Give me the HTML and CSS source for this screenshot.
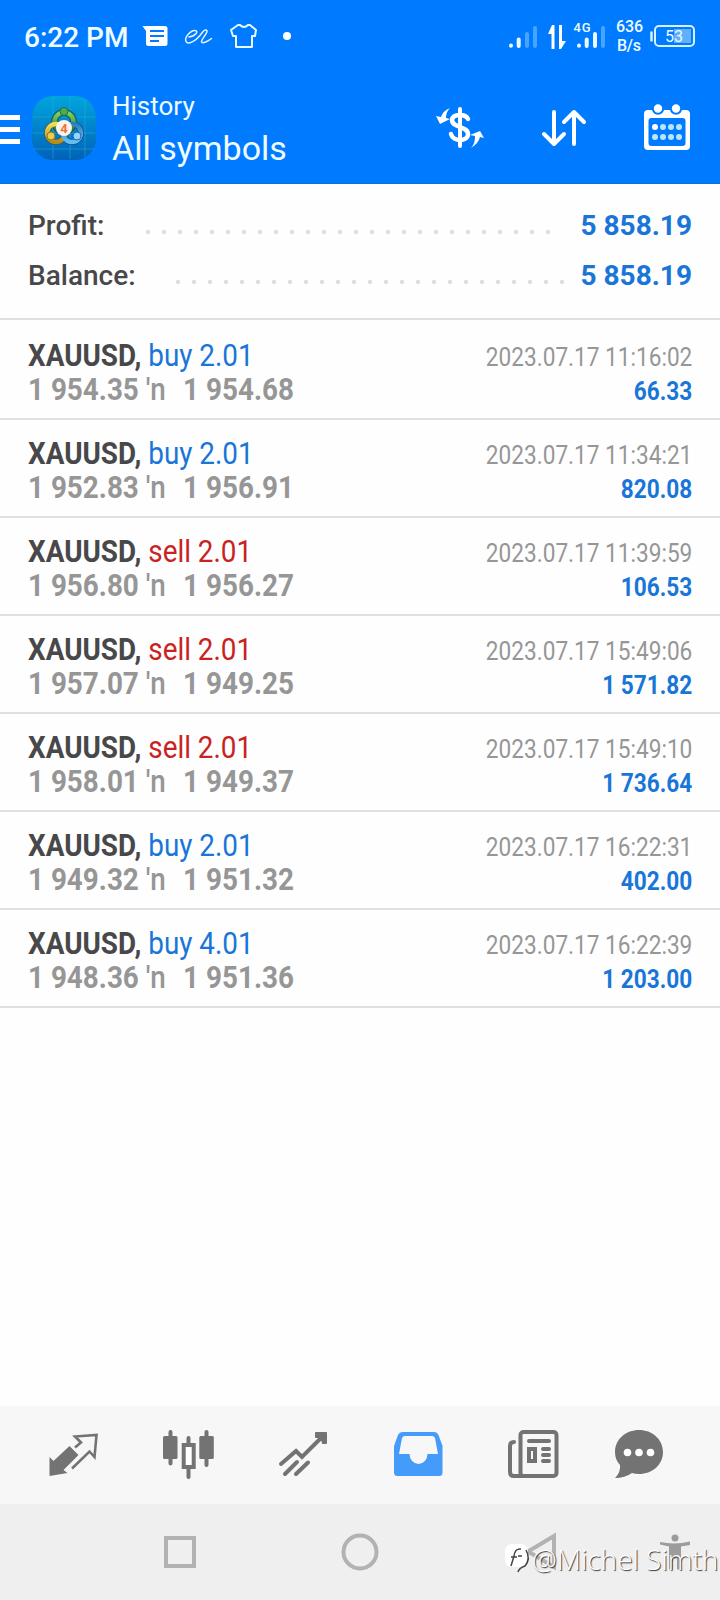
FILE: index.html
```
<!DOCTYPE html>
<html lang="en">
<head>
<meta charset="utf-8">
<title>History</title>
<link rel="stylesheet" href="styles.css">
</head>
<body>
<header class="top">
  <div class="status">
    <span class="clock">6:22 PM</span>
    <svg class="notices" width="160" height="32" viewBox="140 20 160 32">
      <path fill="#fff" d="M142.500 26h22.500a2.500 2.500 0 0 1 2.500 2.500v15a2.500 2.500 0 0 1-2.500 2.500h-16.500a2.500 2.500 0 0 1-2.500-2.500V31z"/>
      <path stroke="#007aff" stroke-width="2" d="M150 31h14M150 36h14M150 41h9"/>
      <path fill="none" stroke="#e4f6ff" stroke-width="1.500" stroke-linecap="round" d="M189 37c7-1 10-6 6-6.500c-4-.5-11 7-9 11c2 4 10-1 14-6c3-4 4-6 6-5.500c4 1-5 9-4.500 12c1 2 7-1 10-3.500"/>
      <path fill="none" stroke="#e8fbff" stroke-width="2" stroke-linejoin="round" d="M238 25l-7 5 2 6h3v11h16v-11h3l1-6-6-5h-2q-4 4-8 0z"/>
      <circle cx="287" cy="36" r="4" fill="#fff"/>
    </svg>
    <svg class="signals" width="200" height="36" viewBox="505 18 200 36">
      <g stroke="#e8fbff" stroke-width="4" stroke-linecap="round">
        <path d="M511 45.500v.2M518.700 39.500v6.500M579 45.500v.2M586.700 39.500v6.500M595 34v12"/>
        <path stroke="#47a5ff" d="M527 34v12M535 28v18M603 28v18"/>
      </g>
      <path fill="#fff" d="M548 34l4-9h2.500v24h-3V34zM559 25h3v16h4l-5 8h-2z"/>
      <text class="svg-net" x="573.500" y="31.500" textLength="17">4G</text>
      <text class="svg-rate" x="616" y="32" textLength="27">636</text>
      <text class="svg-rate" x="617" y="51" textLength="24">B/s</text>
      <rect x="655" y="26" width="39" height="20" rx="4" fill="none" stroke="#d6f1ff" stroke-width="2"/>
      <rect x="674" y="29" width="17" height="14" fill="#5fb0ff"/>
      <path stroke="#d6f1ff" stroke-width="2.500" d="M651.500 31.500v10"/>
      <text class="svg-battery" x="665" y="42" textLength="18" lengthAdjust="spacingAndGlyphs">53</text>
    </svg>
  </div>
  <div class="appbar">
    <div class="menu"><i></i><i></i><i></i></div>
    <svg class="logo" width="64" height="64" viewBox="0 0 64 64">
      <defs>
        <linearGradient id="tile" x2="0" y2="1"><stop offset="0" stop-color="#00a5dd"/><stop offset="1" stop-color="#0062b8"/></linearGradient>
        <linearGradient id="green" x2="0" y2="1"><stop offset="0" stop-color="#7ed36a"/><stop offset="1" stop-color="#237b35"/></linearGradient>
        <linearGradient id="gold" x2="0" y2="1"><stop offset="0" stop-color="#f2dc55"/><stop offset="1" stop-color="#b88b18"/></linearGradient>
        <linearGradient id="sky" x2="0" y2="1"><stop offset="0" stop-color="#2b7fc0"/><stop offset="1" stop-color="#64bff1"/></linearGradient>
      </defs>
      <rect width="64" height="64" rx="21" fill="url(#tile)"/>
      <path stroke="#35b6e4" stroke-width=".7" opacity=".65" d="M21 1v62M38 1v62M53 3v58M1 21h62M1 37h62M1 53h62"/>
      <circle cx="32" cy="26" r="9.500" fill="none" stroke="#195e55" stroke-width="7"/>
      <circle cx="24" cy="37" r="9" fill="none" stroke="#34585a" stroke-width="6"/>
      <circle cx="40" cy="37" r="9" fill="none" stroke="#174b83" stroke-width="6"/>
      <circle cx="32" cy="26" r="9.500" fill="none" stroke="url(#green)" stroke-width="4.500"/>
      <circle cx="24" cy="37" r="9" fill="none" stroke="url(#gold)" stroke-width="4.500"/>
      <circle cx="40" cy="37" r="9" fill="none" stroke="url(#sky)" stroke-width="4.500"/>
      <circle cx="32" cy="15.500" r="4" fill="#50a953" stroke="#237244"/>
      <circle cx="19" cy="40" r="4" fill="#ebd047" stroke="#8a7625"/>
      <circle cx="45" cy="40" r="4" fill="#90d4ff" stroke="#1a68ad"/>
      <circle cx="32" cy="32" r="8" fill="#fff2e8"/>
      <text class="svg-four" x="32" y="36.500" text-anchor="middle">4</text>
    </svg>
    <div class="titles"><div class="sub">History</div><div class="main">All symbols</div></div>
    <svg class="act-dollar" width="50" height="44" viewBox="435 106 50 44">
      <g fill="none" stroke="#fff" stroke-linecap="round">
        <path stroke-width="4" d="M460 109v37"/>
        <path stroke-width="4.500" d="M468 119c-2-5-15-6-16 1c0 8 16 6 16 14c0 8-15 8-17 0"/>
      </g>
      <path fill="#fff" d="M450 108c-5 2-8 5-9 9l-5-1 4 8 10-5-4-1c0-4 1-7 4-10zM471 148c5-3 8-7 9-11l4 1-4-7-10 4 5 1c0 5-1 9-4 12z"/>
    </svg>
    <svg class="act-sort" width="46" height="40" viewBox="541 108 46 40">
      <path fill="none" stroke="#fff" stroke-width="4" stroke-linecap="round" stroke-linejoin="round" d="M554 112v32M544 134l10 10 10-10M574 144v-32M564 122l10-10 10 10"/>
    </svg>
    <svg class="act-cal" width="46" height="48" viewBox="644 103 46 48">
      <rect x="644" y="110" width="46" height="40" rx="4" fill="#fff"/>
      <path fill="#007aff" d="M651.500 118h31a3 3 0 0 1 3 3v22a3 3 0 0 1-3 3h-31a3 3 0 0 1-3-3v-22a3 3 0 0 1 3-3z"/>
      <g fill="#fff" stroke="#007aff" stroke-width="2"><circle cx="658" cy="108.500" r="5.200"/><circle cx="676" cy="108.500" r="5.200"/></g>
      <g fill="#b9e5ff"><circle cx="655" cy="127" r="3" fill="#fff"/><circle cx="663" cy="127" r="3"/><circle cx="671" cy="127" r="3"/><circle cx="679" cy="127" r="3"/><circle cx="655" cy="137" r="3"/><circle cx="663" cy="137" r="3"/><circle cx="671" cy="137" r="3"/><circle cx="679" cy="137" r="3"/></g>
    </svg>
  </div>
</header>
<main class="content">
  <section class="summary">
    <div class="total"><b>Profit:</b><i class="dots dots-profit"></i><span>5 858.19</span></div>
    <div class="total"><b>Balance:</b><i class="dots dots-balance"></i><span>5 858.19</span></div>
  </section>
  <ul class="deals">
    <li class="deal"><div class="deal-l"><p class="sym">XAUUSD, <span class="buy">buy 2.01</span></p><p class="px">1 954.35<span class="to">′n</span>1 954.68</p></div><div class="deal-r"><p class="date">2023.07.17 11:16:02</p><p class="gain">66.33</p></div></li>
    <li class="deal"><div class="deal-l"><p class="sym">XAUUSD, <span class="buy">buy 2.01</span></p><p class="px">1 952.83<span class="to">′n</span>1 956.91</p></div><div class="deal-r"><p class="date">2023.07.17 11:34:21</p><p class="gain">820.08</p></div></li>
    <li class="deal"><div class="deal-l"><p class="sym">XAUUSD, <span class="sell">sell 2.01</span></p><p class="px">1 956.80<span class="to">′n</span>1 956.27</p></div><div class="deal-r"><p class="date">2023.07.17 11:39:59</p><p class="gain">106.53</p></div></li>
    <li class="deal"><div class="deal-l"><p class="sym">XAUUSD, <span class="sell">sell 2.01</span></p><p class="px">1 957.07<span class="to">′n</span>1 949.25</p></div><div class="deal-r"><p class="date">2023.07.17 15:49:06</p><p class="gain">1 571.82</p></div></li>
    <li class="deal"><div class="deal-l"><p class="sym">XAUUSD, <span class="sell">sell 2.01</span></p><p class="px">1 958.01<span class="to">′n</span>1 949.37</p></div><div class="deal-r"><p class="date">2023.07.17 15:49:10</p><p class="gain">1 736.64</p></div></li>
    <li class="deal"><div class="deal-l"><p class="sym">XAUUSD, <span class="buy">buy 2.01</span></p><p class="px">1 949.32<span class="to">′n</span>1 951.32</p></div><div class="deal-r"><p class="date">2023.07.17 16:22:31</p><p class="gain">402.00</p></div></li>
    <li class="deal"><div class="deal-l"><p class="sym">XAUUSD, <span class="buy">buy 4.01</span></p><p class="px">1 948.36<span class="to">′n</span>1 951.36</p></div><div class="deal-r"><p class="date">2023.07.17 16:22:39</p><p class="gain">1 203.00</p></div></li>
  </ul>
</main>
<nav class="tabs">
  <svg width="52" height="52" viewBox="47 1428 52 52"><path fill="#737373" d="M49.500 1457l4 4 16-15 9 9-15 15 4 3-18 3z"/><path fill="none" stroke="#737373" stroke-width="2.600" d="M75 1447.500l6-5-6-6 21.500-1.500-2 22-5-5.500-17.500 17"/></svg>
  <svg width="52" height="52" viewBox="162 1428 52 52"><path stroke="#737373" stroke-width="4" stroke-linecap="round" d="M170.500 1432v31.500M188.500 1438v10M188.500 1467v10M206.500 1432v33"/><rect x="163" y="1436" width="14.500" height="23" rx="1.500" fill="#737373"/><rect x="199.300" y="1436" width="14.500" height="23" rx="1.500" fill="#737373"/><rect x="183.700" y="1445" width="10" height="22" fill="#fff" stroke="#737373" stroke-width="4"/></svg>
  <svg width="52" height="52" viewBox="277 1428 52 52"><path fill="none" stroke="#737373" stroke-width="4" stroke-linecap="round" d="M281 1464l15-13 6 6 22-22M285 1474l12-12M296 1474l12-11.500"/><path fill="#737373" d="M315.500 1432.500h11v11h-4l-1.500-6h-5.500z" stroke="#737373"/></svg>
  <svg width="52" height="52" viewBox="392 1428 52 52"><path fill="#449bfa" d="M403 1432h31q3 0 4.500 3l4 11v26.500q0 3.500-3.500 3.500h-41.500q-3.500 0-3.500-3.500v-26.500l4-11q1.500-3 5-3z"/><path fill="#f7f7f7" d="M405 1436h27q2 0 3 2l3 16h-10.500a9 10 0 0 1-18 0h-10.500l3-16q1-2 3-2z"/></svg>
  <svg width="52" height="52" viewBox="507 1428 52 52"><path fill="none" stroke="#737373" stroke-width="4" stroke-linecap="round" d="M514 1442q-4 0-4 4v26q0 4 4 4h12"/><rect x="520.500" y="1432" width="36" height="44" rx="3" fill="#f7f7f7" stroke="#737373" stroke-width="4"/><path fill="none" stroke="#737373" stroke-width="4" stroke-linecap="round" d="M529 1441h20M543 1449h6M543 1455h6M543 1461h6"/><rect x="529" y="1449" width="6" height="12" fill="none" stroke="#737373" stroke-width="4"/></svg>
  <svg width="52" height="52" viewBox="613 1428 52 52"><path fill="#737373" d="M639 1430c13 0 24 9 24 22s-11 22-24 22q-4 0-7-1q-7 5-17 5q6-6 5-13q-5-5-5-13c0-13 11-22 24-22z"/><g fill="#fff"><circle cx="627.500" cy="1452.500" r="3.800"/><circle cx="639" cy="1452.500" r="3.800"/><circle cx="650.500" cy="1452.500" r="3.800"/></g></svg>
</nav>
<footer class="sysnav">
  <svg width="560" height="44" viewBox="150 1530 560 44" fill="none" stroke="#b2b2b2" stroke-width="4">
    <rect x="166" y="1538" width="28" height="28"/><circle cx="360" cy="1552" r="16.500"/>
    <path d="M554 1536v31l-26-15.500z"/>
    <g fill="#9c9c9c" stroke="none"><circle cx="675" cy="1538" r="3.500"/><path d="M660 1542q15 3 30-.5v3.500l-9 1.500v23h-4v-11h-4v11h-4v-23l-9-2z"/></g>
  </svg>
  <div class="watermark">
    <svg width="28" height="34" viewBox="504 1542 28 34"><rect x="505" y="1544" width="23" height="23" rx="7" fill="#fff"/><path fill="none" stroke="#444" stroke-width="1.500" d="M521 1549q-6-1-7 7l-3 10M511 1557h6M518 1556h4M526 1550q5 9-1 16q-6 2-7 6"/></svg>
    <span>@Michel Simth</span>
  </div>
</footer>
</body>
</html>
```

FILE: styles.css
```
* { box-sizing: border-box; }
body {
  margin: 0;
  width: 720px;
  height: 1600px;
  display: flex;
  flex-direction: column;
  overflow: hidden;
  background: #fefefe;
  font-family: Roboto, "Liberation Sans", sans-serif;
}
svg { display: block; flex: none; }
p, ul { margin: 0; padding: 0; }

.top { height: 184px; background: #007aff; border-bottom: 1px solid #0a6fdf; color: #effcff; }
.status { height: 72px; display: flex; align-items: center; padding-left: 24px; }
.clock { width: 116px; font-size: 28px; font-weight: 500; line-height: 32px; padding-top: 3px; white-space: nowrap; }
.signals { margin-left: 205px; }
.svg-net, .svg-rate, .svg-battery { fill: #effcff; font-weight: 500; font-size: 13px; }
.svg-rate { font-size: 16px; }
.svg-battery { font-size: 17px; font-weight: 400; }
.svg-four { font-size: 13px; font-weight: 700; fill: #e8743b; }

.appbar { height: 111px; display: flex; align-items: flex-start; padding-top: 24px; }
.menu { width: 20px; margin-top: 19px; display: grid; gap: 7px; }
.menu i { height: 5px; background: #fff; }
.logo { margin-left: 12px; }
.titles { width: 323px; padding-left: 16px; white-space: nowrap; }
.sub { font-size: 26px; line-height: 30px; margin-top: -5px; }
.main { font-size: 34px; line-height: 40px; margin-top: 7px; }
.act-dollar { margin: 10px 0 0 16px; }
.act-sort { margin: 12px 0 0 56px; }
.act-cal { margin: 7px 0 0 57px; }

.content { height: 1222px; }
.summary { height: 136px; padding: 17px 28px 0; border-bottom: 2px solid #e0e0e0; }
.total { height: 50px; display: flex; justify-content: space-between; font-size: 28px; line-height: 50px; color: #48484a; }
.total b { width: 112px; font-weight: 500; white-space: nowrap; }
.total span { flex: 1; text-align: right; font-weight: 700; color: #1976d8; white-space: nowrap; }
.dots { height: 6px; margin-top: 28px; background: radial-gradient(circle at 8px 3px, #dedede 0 1.8px, transparent 2.5px) 0 0 / 16px 6px; }
.dots-profit { width: 416px; }
.dots-balance { width: 400px; margin-left: 30px; }

.deals { list-style: none; }
.deal { height: 98px; display: flex; justify-content: space-between; padding: 16px 28px 0; border-bottom: 2px solid #e0e0e0; white-space: nowrap; }
.deal:first-child { height: 100px; padding-top: 18px; }
.deal-l p { font-size: 32px; line-height: 34px; font-weight: 700; color: #969696; transform: scaleX(.87); transform-origin: left; }
.deal-l .sym { color: #48484a; }
.sym span { font-weight: 400; }
.buy { color: #1976d8; }
.sell { color: #c8231f; }
.px .to { font-weight: 500; margin: 0 20px 0 8px; }
.deal-r { text-align: right; }
.deal-r p { font-size: 26px; line-height: 34px; color: #969696; transform: scaleX(.87); transform-origin: right; padding-top: 2px; height: 34px; }
.deal-r .gain { font-weight: 700; color: #1976d8; }

.tabs { height: 98px; display: flex; align-items: flex-start; gap: 63px; padding: 22px 0 0 47px; background: #f7f7f7; }
.tabs svg:last-child { margin-left: -9px; }
.sysnav { height: 96px; position: relative; padding: 26px 0 0 150px; background: #efefef; }
.watermark { position: absolute; left: 504px; top: 38px; display: flex; color: #fff; font: 300 28px/34px "Open Sans", sans-serif; text-shadow: 1px 1px 1px #333; white-space: nowrap; }
```
